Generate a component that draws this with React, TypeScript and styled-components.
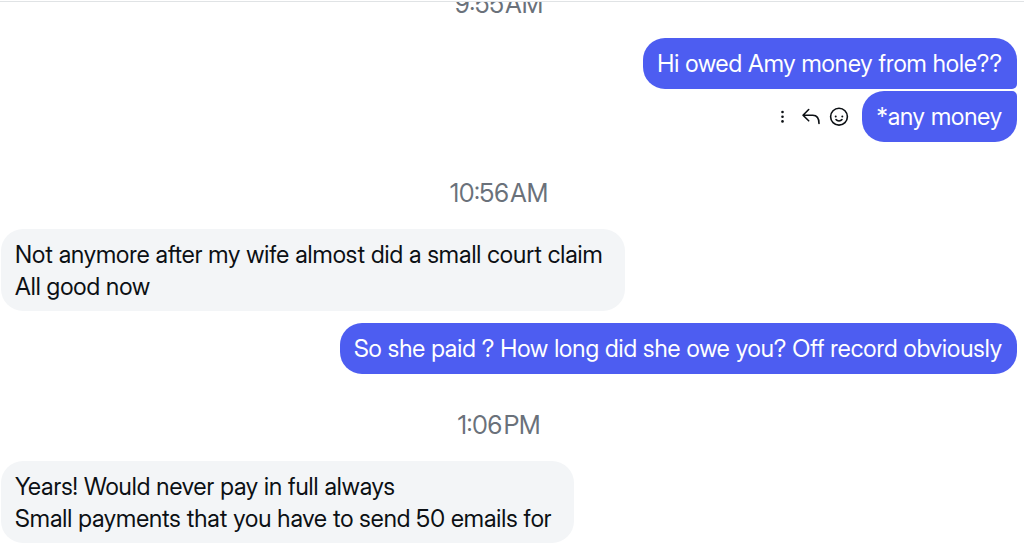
import React from "react";
import styled, { createGlobalStyle } from "styled-components";

const GlobalStyle = createGlobalStyle`
  * { box-sizing: border-box; }
  body {
    margin: 0;
    background: #ffffff;
    color: #0c1014;
    font-family: "Inter Display", Inter, "Liberation Sans", sans-serif;
    font-size: 24px;
    line-height: 32px;
  }
`;

const Page = styled.main`
  padding-top: 1px;
`;

const Thread = styled.section`
  display: flex;
  flex-direction: column;
  padding: 0 7px 5px 1px;
  border-top: 1px solid #e0e3e5;
  overflow: hidden;
`;

const Time = styled.time<{ $first?: boolean }>`
  text-align: center;
  color: #6a717a;
  font-size: 25px;
  padding-right: 20px;
  margin: ${(p) => (p.$first ? "-14px 0 18px" : "35px 0 20px")};
`;

const Row = styled.div<{ $own?: boolean; $gap?: number }>`
  display: flex;
  align-items: center;
  justify-content: ${(p) => (p.$own ? "flex-end" : "flex-start")};
  margin-top: ${(p) => p.$gap ?? 0}px;
`;

const Bubble = styled.p<{ $own?: boolean; $join?: "top" | "bottom" }>`
  margin: 0;
  white-space: pre-line;
  padding: ${(p) => (p.$own ? "10px 15px 9px 14px" : "10px 22px 8px 14px")};
  color: ${(p) => (p.$own ? "#ffffff" : "#0c1014")};
  background: ${(p) => (p.$own ? "#4d5df1" : "#f3f5f7")};
  border-radius: 22px;
  ${(p) => p.$join === "bottom" && "border-bottom-right-radius: 5px;"}
  ${(p) => p.$join === "top" && "border-top-right-radius: 5px;"}
`;

const Actions = styled.div`
  display: flex;
  align-items: center;
  gap: 8px;
  margin-right: 13px;
`;

const IconButton = styled.button`
  display: flex;
  padding: 0;
  border: 0;
  background: none;
  color: #0c1014;
`;

export default function App() {
  return (
    <>
      <GlobalStyle />
      <Page>
        <Thread>
          <Time $first>9:55{"\u200A"}AM</Time>
          <Row $own>
            <Bubble $own $join="bottom">Hi owed Amy money from hole??</Bubble>
          </Row>
          <Row $own $gap={2}>
            <Actions>
              <IconButton aria-label="More options">
                <svg width="20" height="20" viewBox="0 0 20 20" fill="currentColor">
                  <circle cx="9.5" cy="5" r="1.3" />
                  <circle cx="9.5" cy="9.7" r="1.3" />
                  <circle cx="9.5" cy="14.4" r="1.3" />
                </svg>
              </IconButton>
              <IconButton aria-label="Reply">
                <svg width="20" height="20" viewBox="0 0 20 20" fill="none" stroke="currentColor" strokeWidth="1.6" strokeLinecap="round" strokeLinejoin="round">
                  <path d="M7.7 2.5 2 8.2l5.7 5.6M2 8.2h9.8c4.2 0 6.2 2.6 6.2 8.3" />
                </svg>
              </IconButton>
              <IconButton aria-label="React">
                <svg width="20" height="20" viewBox="0 0 20 20" fill="none" stroke="currentColor" strokeWidth="1.6" strokeLinecap="round">
                  <circle cx="10" cy="9.7" r="8.4" />
                  <path d="M7 12.6c1.4 1.8 4.6 1.8 6 0" />
                  <g fill="currentColor" stroke="none">
                    <circle cx="6.7" cy="9.4" r="1" />
                    <circle cx="13.3" cy="9.4" r="1" />
                  </g>
                </svg>
              </IconButton>
            </Actions>
            <Bubble $own $join="top">*any money</Bubble>
          </Row>
          <Time>10:56{"\u200A"}AM</Time>
          <Row>
            <Bubble>{"Not anymore after my wife almost did a small court claim\nAll good now"}</Bubble>
          </Row>
          <Row $own $gap={12}>
            <Bubble $own>So she paid ? How long did she owe you? Off record obviously</Bubble>
          </Row>
          <Time>1:06{"\u200A"}PM</Time>
          <Row>
            <Bubble>{"Years! Would never pay in full always\nSmall payments that you have to send 50 emails for"}</Bubble>
          </Row>
        </Thread>
      </Page>
    </>
  );
}
